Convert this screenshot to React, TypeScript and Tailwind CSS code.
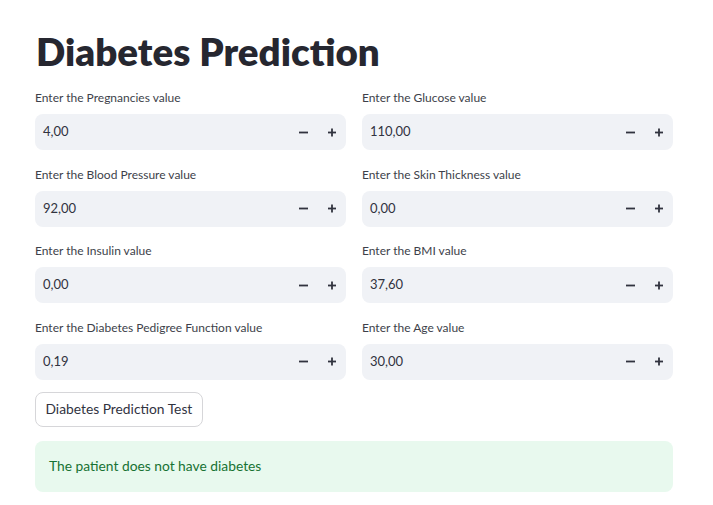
import React from "react";

const fields: [string, string][] = [
  ["Enter the Pregnancies value", "4,00"],
  ["Enter the Glucose value", "110,00"],
  ["Enter the Blood Pressure value", "92,00"],
  ["Enter the Skin Thickness value", "0,00"],
  ["Enter the Insulin value", "0,00"],
  ["Enter the BMI value", "37,60"],
  ["Enter the Diabetes Pedigree Function value", "0,19"],
  ["Enter the Age value", "30,00"],
];

function NumberInput({ label, value }: { label: string; value: string }) {
  return (
    <div className="flex flex-col">
      <div className="text-[12px] leading-[16px] text-[#3d3f4a] mb-[8px]">{label}</div>
      <div className="h-[36px] rounded-[8px] bg-[#f0f2f6] flex items-center pl-[8px] pr-[10px]">
        <span className="flex-1 text-[13px] text-[#31333f]">{value}</span>
        <span className="w-[9px] h-[9px] flex items-center">
          <svg width="9" height="9" viewBox="0 0 9 9">
            <rect x="0" y="3.6" width="9" height="1.8" fill="#31333f" />
          </svg>
        </span>
        <span className="w-[20px]" />
        <span className="w-[8px] h-[9px] flex items-center">
          <svg width="8" height="9" viewBox="0 0 8 9">
            <rect x="0" y="3.6" width="8" height="1.8" fill="#31333f" />
            <rect x="3.1" y="0.5" width="1.8" height="8" fill="#31333f" />
          </svg>
        </span>
      </div>
    </div>
  );
}

export default function App() {
  return (
    <div className="w-[713px] h-[505px] bg-white overflow-hidden" style={{ fontFamily: "Lato, 'Noto Sans', sans-serif" }}>
      <div className="pl-[35px] pr-[40px] pt-[28px]">
        <h1 className="text-[38.5px] leading-[46px] font-extrabold text-[#262730] mb-[16px] pl-[1px]">Diabetes Prediction</h1>
        <div className="grid grid-cols-2 gap-x-[16px] gap-y-[16.5px]">
          {fields.map(([l, v]) => (
            <NumberInput key={l} label={l} value={v} />
          ))}
        </div>
        <button className="mt-[12px] h-[35px] px-[9.5px] rounded-[8px] border border-[#d6d6d9] bg-white text-[13.8px] text-[#31333f]">
          Diabetes Prediction Test
        </button>
        <div className="mt-[14px] h-[51px] rounded-[8px] bg-[#e8f9ee] flex items-center px-[14px] text-[13.8px] text-[#177233]">
          The patient does not have diabetes
        </div>
      </div>
    </div>
  );
}
